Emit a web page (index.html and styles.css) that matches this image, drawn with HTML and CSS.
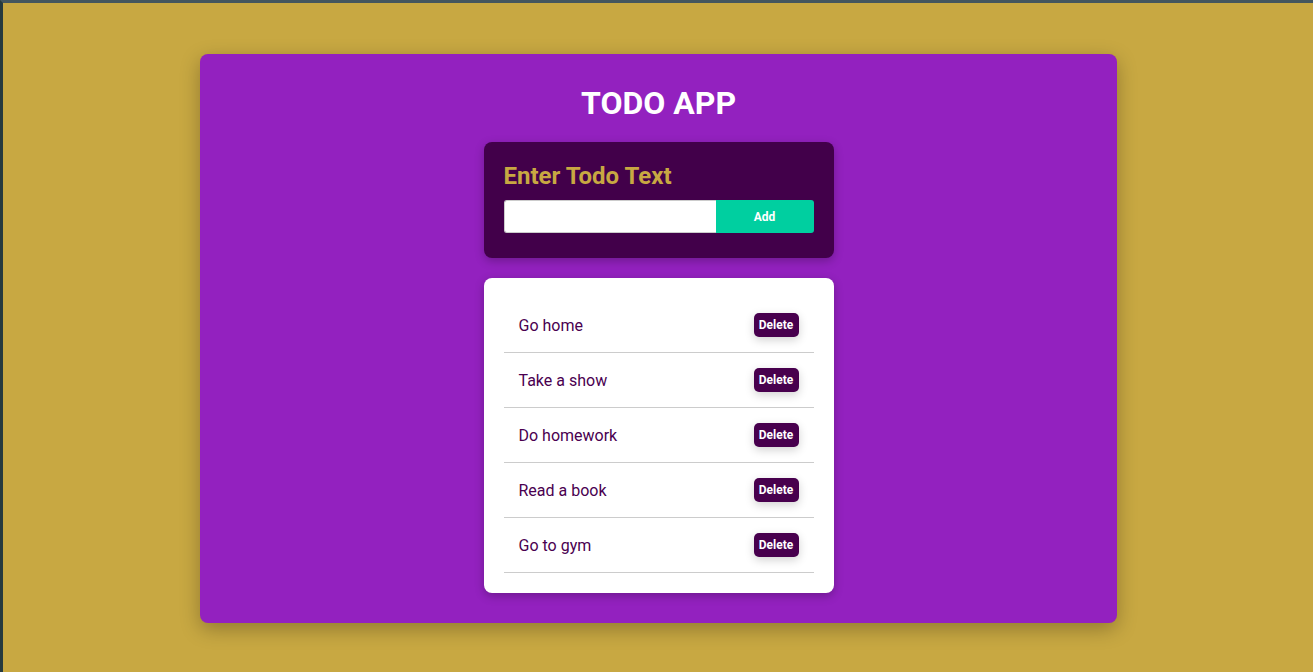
FILE: index.html
```html
<!DOCTYPE html>
<html lang="en">
<head>
<meta charset="utf-8">
<title>Todo App</title>
<link rel="stylesheet" href="styles.css">
</head>
<body>
<div class="frame">
  <main class="app">
    <h1 class="app-title">TODO APP</h1>
    <section class="entry-card">
      <h2 class="entry-title">Enter Todo Text</h2>
      <form class="entry-form">
        <input class="entry-input" type="text">
        <button class="entry-button" type="button">Add</button>
      </form>
    </section>
    <section class="list-card">
      <ul class="todo-list">
        <li class="todo-item"><span class="todo-text">Go home</span><button class="delete-button" type="button">Delete</button></li>
        <li class="todo-item"><span class="todo-text">Take a show</span><button class="delete-button" type="button">Delete</button></li>
        <li class="todo-item"><span class="todo-text">Do homework</span><button class="delete-button" type="button">Delete</button></li>
        <li class="todo-item"><span class="todo-text">Read a book</span><button class="delete-button" type="button">Delete</button></li>
        <li class="todo-item"><span class="todo-text">Go to gym</span><button class="delete-button" type="button">Delete</button></li>
      </ul>
    </section>
  </main>
</div>
</body>
</html>
```
FILE: styles.css
```css
* { box-sizing: border-box; }
html, body {
  margin: 0;
  padding: 0;
  height: 100%;
}
body {
  font-family: Roboto, "Liberation Sans", sans-serif;
  background: #c8a842;
}
.frame {
  min-height: 100%;
  border-top: 3px solid #44565e;
  border-left: 3px solid #263a3e;
  padding-top: 51px;
  display: flex;
  flex-direction: column;
  align-items: center;
}
.app {
  width: 70%;
  background: #9321bf;
  border-radius: 8px;
  box-shadow: 0 6px 20px rgba(0, 0, 0, 0.28);
  padding: 30px 0 30px 1px;
  display: flex;
  flex-direction: column;
  align-items: center;
}
.app-title {
  margin: 0 0 20px;
  color: #ffffff;
  font-size: 32px;
  font-weight: 700;
  line-height: 38px;
}
.entry-card {
  width: 350px;
  background: #42004a;
  border-radius: 8px;
  box-shadow: 0 3px 10px rgba(0, 0, 0, 0.25);
  padding: 20px 20px 25px;
}
.entry-title {
  margin: 0 0 10px;
  color: #c8a842;
  font-size: 24px;
  font-weight: 700;
  line-height: 28px;
}
.entry-form {
  display: flex;
  margin: 0;
}
.entry-input {
  flex: 1;
  height: 33px;
  border: 1px solid #cccccc;
  border-right: none;
  border-radius: 3px 0 0 3px;
  background: #ffffff;
  margin: 0;
  padding: 0 8px;
}
.entry-button {
  width: 98px;
  height: 33px;
  border: none;
  border-radius: 0 3px 3px 0;
  background: #00cfa0;
  color: #ffffff;
  font-family: Roboto, "Liberation Sans", sans-serif;
  font-size: 12px;
  font-weight: 700;
  margin: 0;
}
.list-card {
  width: 350px;
  margin-top: 20px;
  background: #ffffff;
  border-radius: 8px;
  box-shadow: 0 3px 10px rgba(0, 0, 0, 0.25);
  padding: 20px;
}
.todo-list {
  list-style: none;
  margin: 0;
  padding: 0;
}
.todo-item {
  height: 55px;
  display: flex;
  align-items: center;
  justify-content: space-between;
  padding: 0 15px;
  border-bottom: 1px solid #cccccc;
}
.todo-text {
  color: #4a0050;
  font-size: 16px;
}
.delete-button {
  width: 45px;
  height: 24px;
  border: none;
  border-radius: 5px;
  background: #48004e;
  color: #ffffff;
  font-family: Roboto, "Liberation Sans", sans-serif;
  font-size: 12px;
  font-weight: 700;
  padding: 0;
  box-shadow: 0 3px 10px rgba(0, 0, 0, 0.18);
}
```
